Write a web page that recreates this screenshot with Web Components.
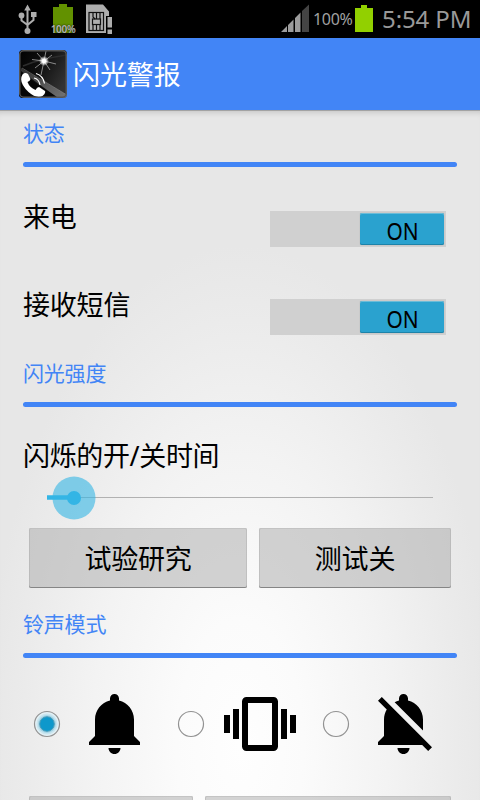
<!DOCTYPE html>
<html lang="zh-CN">
<head>
<meta charset="utf-8">
<meta name="viewport" content="width=device-width, initial-scale=1">
<title>闪光警报</title>
<style>
    body {
        margin: 0;
        width: 480px;
        height: 800px;
        overflow: hidden;
        font-family: "Noto Sans", "Noto Sans CJK SC", sans-serif;
        color: #000;
    }
</style>
</head>
<body>
<flash-app>
    <status-bar slot="top"></status-bar>
    <action-bar slot="top">闪光警报</action-bar>

    <settings-section label="状态">
        <toggle-row>来电</toggle-row>
        <toggle-row>接收短信</toggle-row>
    </settings-section>

    <settings-section label="闪光强度" class="strength">
        <seek-bar>闪烁的开/关时间</seek-bar>
        <button-row>
            <holo-button style="width: 218px">试验研究</holo-button>
            <holo-button style="width: 192px">测试关</holo-button>
        </button-row>
    </settings-section>

    <settings-section label="铃声模式" class="ringer">
        <ringer-modes></ringer-modes>
        <button-row class="last">
            <holo-button style="width: 164px"></holo-button>
            <holo-button style="width: 246px"></holo-button>
        </button-row>
    </settings-section>
</flash-app>

<script>
const defineComponent = (title, styles, template, functionality) => {
    const componentTemplate = document.createElement('template');
    componentTemplate.innerHTML = `<style>${styles}</style>${template}`;

    class Component extends HTMLElement {
        constructor() {
            super();
            this.attachShadow({ mode: 'open' });
            this.shadowRoot.appendChild(componentTemplate.content.cloneNode(true));
        }

        connectedCallback() {
            if (functionality) {
                functionality(this, this.shadowRoot);
            }
        }
    }

    window.customElements.define(title, Component);
};

defineComponent('flash-app', `
    :host {
        display: flex;
        flex-direction: column;
        height: 800px;
        overflow: hidden;
        background: radial-gradient(ellipse 255px 500px at 240px 745px, #fefefe 0%, #fbfbfb 25%, #f3f3f3 58%, #ebebeb 85%, #e7e7e7 100%);
    }
    main {
        flex: none;
        padding: 0 23px;
        box-shadow: inset 0 1px 0 #a3a3a3, inset 0 7px 6px -5px rgba(0, 0, 0, .17);
    }
`, `
    <slot name="top"></slot>
    <main><slot></slot></main>
`);

defineComponent('status-bar', `
    :host {
        display: flex;
        flex: none;
        justify-content: space-between;
        box-sizing: border-box;
        height: 38px;
        padding: 0 8px 0 16px;
        background: #000;
        color: #a0a0a0;
    }
    svg { display: block; flex: none; }
    .side { display: flex; }
    .battery { display: grid; width: 28px; margin: 0 8px 0 9px; }
    .battery > * { grid-area: 1 / 1; }
    .battery svg { justify-self: center; }
    .battery span {
        align-self: start;
        justify-self: center;
        margin-top: 22px;
        font-size: 10px;
        font-weight: 600;
        line-height: 14px;
        letter-spacing: -.3px;
        color: #b4b4b4;
        text-shadow: 0 0 2px #000;
    }
    .level { margin-left: 3px; font-size: 16px; line-height: 39px; width: 41px; white-space: nowrap; letter-spacing: -.3px; }
    .clock { margin-left: 8px; font-size: 24px; line-height: 37px; width: 90px; white-space: nowrap; letter-spacing: -.1px; color: #999; }
`, `
    <div class="side">
        <svg width="24" height="38" viewBox="0 0 24 38">
            <g fill="none" stroke="#adadad" stroke-width="2">
                <path d="M11.500 7V31M5.500 17v3.500l6 4.500M17.500 16v4l-6 5"/>
            </g>
            <path d="M11.500 4.500l3.300 6h-6.600zM15 12h5.500v5H15z" fill="#adadad"/>
            <circle cx="5.500" cy="15.500" r="2.900" fill="#adadad"/>
            <circle cx="11.500" cy="31" r="3" fill="#adadad"/>
        </svg>
        <div class="battery">
            <svg width="20" height="38" viewBox="0 0 20 38"><path d="M6 4h8v3h6v26H0V7h6z" fill="#629100"/></svg>
            <span>100%</span>
        </div>
        <svg width="30" height="38" viewBox="0 0 30 38">
            <path d="M1 4.500h17l6 7V16h-3v17H1z" fill="#adadad"/>
            <g fill="none" stroke="#101010" stroke-width="1.200">
                <rect x="4" y="12.500" width="14.500" height="18"/>
                <rect x="7.500" y="19" width="8" height="5.500"/>
                <path d="M8 13v4l2 2M11.500 13v6M15 13v6M8 30v-6M11.500 30v-5.500M15 30v-6"/>
            </g>
            <path d="M22.500 17h4.500v10.500h-4.500zM22.500 29.500h4.500V34h-4.500z" fill="#adadad"/>
        </svg>
    </div>
    <div class="side">
        <svg width="29" height="38" viewBox="0 0 29 38">
            <path d="M0 32l6-6v6zM7 25l5.500-5.500V32H7zM14 18l5.500-5.500V32H14z" fill="#9c9c9c"/>
            <path d="M21 11l7-6.500V32h-7z" fill="#444"/>
        </svg>
        <span class="level">100%</span>
        <svg width="20" height="38" viewBox="0 0 20 38"><path d="M7 5h6v3h6v24H1V8h6z" fill="#92d000"/></svg>
        <span class="clock">5:54 PM</span>
    </div>
`);

defineComponent('action-bar', `
    :host {
        display: flex;
        flex: none;
        align-items: center;
        box-sizing: border-box;
        height: 72px;
        padding-left: 19px;
        background: #4285f6;
        color: #fff;
        font-size: 27px;
        line-height: 40px;
    }
    svg { display: block; margin-right: 6px; }
    span { margin-top: 1px; letter-spacing: -.1px; }
`, `
    <svg width="48" height="48" viewBox="0 0 48 48">
        <defs>
            <linearGradient id="dark" x1="0" y1="0" x2="1" y2=".6">
                <stop offset="0" stop-color="#000"/><stop offset=".5" stop-color="#111"/><stop offset="1" stop-color="#333"/>
            </linearGradient>
            <radialGradient id="glow">
                <stop offset="0" stop-color="#fff"/><stop offset=".35" stop-color="#fff"/><stop offset="1" stop-color="#fff" stop-opacity="0"/>
            </radialGradient>
            <linearGradient id="edge" x1="0" y1="0" x2="1" y2="1">
                <stop offset="0" stop-color="#333"/><stop offset="1" stop-color="#777"/>
            </linearGradient>
            <clipPath id="frame"><rect width="48" height="48" rx="4"/></clipPath>
        </defs>
        <g clip-path="url(#frame)">
            <rect width="48" height="48" fill="url(#dark)"/>
            <path d="M0 22L40 48H0z" fill="#060606"/>
            <path d="M2 18L48 45v5h-6L2 21z" fill="url(#edge)"/>
            <path d="M3 18L48 45" stroke="#999" stroke-width=".5"/>
            <path d="M4 16q16-7 44-11" stroke="#2c2c2c" stroke-width="1.500" fill="none"/>
            <path d="M25 11L27 1M25 11L18 3M25 11L33 5M25 11L13 9.500M25 11L37 14M25 11L16 18M25 11L22 25M25 11L31 20" stroke="#bbb" stroke-width=".7"/>
            <circle cx="25" cy="11" r="5" fill="url(#glow)"/>
            <path d="M3.500 24.500Q6 22 9 24l2.500 5q-.3 2-3 3 2 5.500 8 8 1.500-3 3.500-3l6 4q1 2-2.500 5-6 3-14-4Q-1 32 3.500 24.500z" fill="#fff"/>
            <path d="M15 28q5 1 6 7M17 23.500q7 2 8.500 10" stroke="#fff" stroke-width="1.200" fill="none"/>
        </g>
        <rect x=".75" y=".75" width="46.500" height="46.500" rx="4" fill="none" stroke="#555" stroke-width="1.500"/>
    </svg>
    <span><slot></slot></span>
`);

defineComponent('settings-section', `
    :host { display: block; height: 240px; }
    :host(.strength) { height: 251px; }
    h2 {
        margin: 0;
        padding-top: 9px;
        height: 43px;
        font-size: 21px;
        font-weight: 400;
        line-height: 28px;
        letter-spacing: -.2px;
        color: #4285f6;
    }
    hr { margin: 0; height: 5px; border: 0; border-radius: 3px; background: #4285f6; }
`, `
    <h2></h2>
    <hr>
    <slot></slot>
`, (host, root) => {
    root.querySelector('h2').textContent = host.getAttribute('label');
});

defineComponent('toggle-row', `
    :host { display: flex; justify-content: space-between; height: 88px; padding: 0 11px 0 0; }
    .label { margin-top: 30px; font-size: 27px; line-height: 40px; letter-spacing: -.2px; }
    .track {
        display: flex;
        justify-content: flex-end;
        box-sizing: border-box;
        width: 176px;
        height: 36px;
        margin-top: 44px;
        padding: 2px 2px 2px 0;
        background: #d0d0d0;
    }
    .thumb {
        width: 84px;
        height: 32px;
        border-radius: 2px;
        background: #2aa2cf;
        box-shadow: inset 0 1px 0 #6bbcd8, inset 0 -1px 0 #1e83a9, 0 0 1px #999;
        font-size: 24px;
        font-weight: 400;
        line-height: 35px;
        text-align: center;
    }
    .thumb span { display: inline-block; transform: scaleX(.87); }
`, `
    <span class="label"><slot></slot></span>
    <div class="track"><div class="thumb"><span>ON</span></div></div>
`);

defineComponent('seek-bar', `
    :host { display: block; height: 121px; }
    .label { height: 69px; }
    .label span { display: block; padding-top: 29px; font-size: 27px; line-height: 40px; letter-spacing: -.35px; }
    svg { display: block; margin-left: 24px; }
`, `
    <div class="label"><span><slot></slot></span></div>
    <svg width="387" height="44" viewBox="0 0 387 44">
        <path d="M0 21.500H386" stroke="#b1b1b1"/>
        <path d="M0 21.500H27" stroke="#33b5e5" stroke-width="4.500"/>
        <circle cx="27" cy="22" r="21.500" fill="#33b5e5" fill-opacity=".6"/>
        <circle cx="27" cy="22" r="7" fill="#33b5e5"/>
    </svg>
`);

defineComponent('button-row', `
    :host { display: flex; gap: 12px; padding-left: 6px; }
`, `<slot></slot>`);

defineComponent('holo-button', `
    :host {
        display: block;
        flex: none;
        box-sizing: border-box;
        height: 60px;
        border-radius: 2px;
        background: rgba(170, 170, 170, .5);
        box-shadow: inset 0 1px 0 rgba(190, 190, 190, .7), inset 1px 0 0 rgba(160, 160, 160, .35), inset -1px 0 0 rgba(160, 160, 160, .35), inset 0 -1px 0 #858585;
        font-size: 27px;
        line-height: 61px;
        letter-spacing: -.2px;
        text-align: center;
    }
`, `<slot></slot>`);

defineComponent('ringer-modes', `
    :host {
        display: grid;
        grid-template-columns: 144px 145px 1fr;
        align-items: center;
        height: 132px;
        padding: 0 0 6px 10px;
    }
    .mode { display: flex; align-items: center; gap: 19px; }
    svg { display: block; flex: none; }
`, '', (host, root) => {
    // bell, vibrate, bell off
    const modes = [
        'M11.500 22c1.100 0 2-.9 2-2h-4c0 1.100.9 2 2 2zm6.500-6v-5.500c0-3.070-2.130-5.640-5-6.320V3.500c0-.83-.67-1.500-1.500-1.500S10 2.670 10 3.500v.68c-2.870.68-5 3.250-5 6.320V16l-2 2v1h17v-1l-2-2z',
        'M0 15h2V9H0v6zm3 2h2V7H3v10zm19-8v6h2V9h-2zm-3 8h2V7h-2v10zM16.500 3h-9C6.670 3 6 3.670 6 4.500v15c0 .83.67 1.500 1.500 1.500h9c.83 0 1.500-.67 1.500-1.500v-15c0-.83-.67-1.500-1.500-1.500zM16 19H8V5h8v14z',
        'M11.500 22c1.100 0 2-.9 2-2h-4c0 1.100.9 2 2 2zM18 10.500c0-3.070-2.130-5.640-5-6.320V3.500c0-.83-.67-1.500-1.500-1.500S10 2.670 10 3.500v.68c-.51.12-.99.32-1.450.56L18 14.180V10.500zm-.27 8.500l2 2L21 19.730 4.270 3 3 4.270l2.920 2.920C5.340 8.160 5 9.290 5 10.500V16l-2 2v1h14.730z'
    ];
    const checked = `
        <circle cx="14" cy="14" r="10.500" fill="#c9e5ef"/>
        <circle cx="14" cy="14" r="9" fill="#a5d4e6"/>
        <circle cx="14" cy="14" r="7.300" fill="#0e98cb" stroke="#4b9cb8"/>
    `;
    modes.forEach((path, i) => {
        const mode = document.createElement('div');
        mode.className = 'mode';
        mode.innerHTML = `
            <svg width="28" height="28" viewBox="0 0 28 28">
                <circle cx="14" cy="14" r="12.500" fill="${i === 0 ? '#e3f0f5' : 'none'}" stroke="#929292" stroke-width="1.200"/>
                ${i === 0 ? checked : ''}
            </svg>
            <svg width="72" height="72" viewBox="0 0 24 24"><path d="${path}"/></svg>
        `;
        root.appendChild(mode);
    });
});
</script>
</body>
</html>
